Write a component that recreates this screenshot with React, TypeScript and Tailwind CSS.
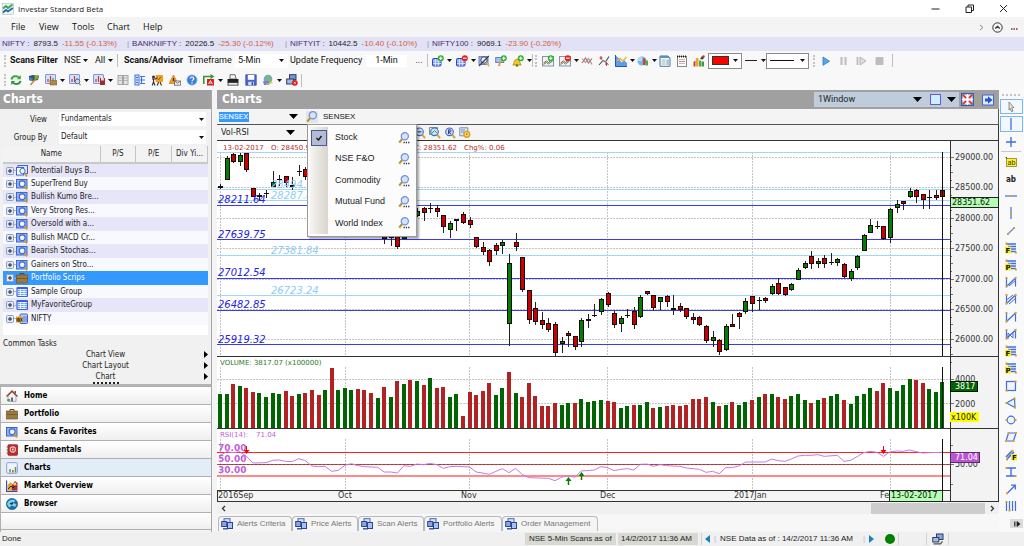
import type { ReactNode } from "react";
import clsx from "clsx";

/* ---------- icons ---------- */

function Ico({ children, className }: { children: ReactNode; className?: string }) {
  return (
    <svg viewBox="0 0 12 12" className={clsx("h-3 w-3 flex-shrink-0", className)} aria-hidden="true">
      {children}
    </svg>
  );
}

function Caret() {
  return (
    <svg viewBox="0 0 5 3" className="h-[3px] w-[5px] flex-shrink-0" aria-hidden="true">
      <path d="M0 0h5L2.5 3z" fill="#111" />
    </svg>
  );
}

function BigCaret() {
  return (
    <svg viewBox="0 0 9 5" className="h-[5px] w-[9px] flex-shrink-0" aria-hidden="true">
      <path d="M0 0h9L4.5 5z" fill="#000" />
    </svg>
  );
}

const miniChart = (
  <>
    <rect x="0.5" y="0.5" width="10" height="9" rx="0.5" fill="#d3e0fb" stroke="#7f97dd" />
    <path d="M3 8V5M5.5 8V2" stroke="#d23b3b" strokeWidth="1.2" />
    <path d="M8 8V4" stroke="#2f9a4a" strokeWidth="1.2" />
  </>
);
const gridBox = (
  <>
    <rect x="0.5" y="3.5" width="8.5" height="7.5" rx="1" fill="#7f9df0" stroke="#2c48c8" />
    <path d="M1 6h8M1 8.5h8M3.5 4v7M6.3 4v7" stroke="#e6edff" strokeWidth="0.8" />
  </>
);
const plusBadge = (
  <>
    <circle cx="8.8" cy="3.2" r="3" fill="#2fae2f" />
    <path d="M7 3.2h3.6M8.8 1.4v3.6" stroke="#fff" strokeWidth="1.1" />
  </>
);
const minusBadge = (
  <>
    <circle cx="8.8" cy="3.2" r="3" fill="#e81c1c" />
    <path d="M7 3.2h3.6" stroke="#fff" strokeWidth="1.2" />
  </>
);
const trendBox = (
  <>
    <rect x="0.5" y="1.5" width="11" height="9.5" fill="#eef3fa" stroke="#8a93a5" />
    <path d="M1.5 8l3-2 2 1.5 4-3.5" stroke="#d23b3b" fill="none" />
    <path d="M1.5 9.5l3-2 2 1.5 4-3" stroke="#2f9a4a" fill="none" />
  </>
);

function LogoIcon() {
  return (
    <Ico>
      <rect x="0.5" y="0.5" width="11" height="11" fill="#eef5f5" stroke="#a8b9c5" strokeWidth="0.6" />
      <path d="M1 5.5l3-2.5 2 2 4.5-3.5" stroke="#35a84b" strokeWidth="1.8" fill="none" />
      <path d="M1 9.5l3-2.5 2 1.5L10.8 5" stroke="#2a67a8" strokeWidth="1.8" fill="none" />
    </Ico>
  );
}
function RefreshIcon() {
  return (
    <Ico>
      <path d="M1.5 5.5C2 2 7 1.2 9 3.5" stroke="#38a845" strokeWidth="2" fill="none" />
      <path d="M10.8 1v4.2H6.8z" fill="#38a845" />
      <path d="M10.5 6.8C10 10.2 5 11 3 8.7" stroke="#2f9440" strokeWidth="2" fill="none" />
      <path d="M1.2 11V7h4z" fill="#2f9440" />
    </Ico>
  );
}
function BrushIcon() {
  return (
    <Ico>
      <path d="M1 2l4-1 6 1-1 4-5 1-4-1z" fill="#3d4a66" />
      <path d="M6 2l5-1-1 4-3 1z" fill="#69b33c" />
      <path d="M1 3l4 1-1 3-3-1z" fill="#3f7fd6" />
      <path d="M2.5 11L7 5.5" stroke="#c8882a" strokeWidth="1.5" />
    </Ico>
  );
}
function ChartFolderIcon() {
  return (
    <Ico>
      {miniChart}
      <path d="M5 6.5h7V11H5z" fill="#b08848" stroke="#7c5a26" strokeWidth="0.5" />
    </Ico>
  );
}
function ChartSearchIcon() {
  return (
    <Ico>
      {miniChart}
      <circle cx="8.5" cy="7.5" r="2.3" fill="#c9defa" stroke="#4b6fb8" />
      <path d="M10 9.3l1.6 2" stroke="#c8922a" strokeWidth="1.4" />
    </Ico>
  );
}
function ChartRemoveIcon() {
  return (
    <Ico>
      {miniChart}
      <path d="M7 4h5v7H7z" fill="#9c2f35" />
      <path d="M8 4h2.8v2.5H8z" fill="#e8dede" />
    </Ico>
  );
}
function ColumnsIcon() {
  return (
    <Ico>
      <rect x="1" y="1.5" width="4.5" height="9" fill="#e4e4e4" stroke="#a5a5a5" />
      <rect x="6.5" y="1.5" width="4.5" height="9" fill="#e4e4e4" stroke="#a5a5a5" />
      <path d="M1.5 4h4M1.5 6.5h4M7 4h4M7 6.5h4" stroke="#a5a5a5" strokeWidth="0.7" />
    </Ico>
  );
}
function TreeListIcon() {
  return (
    <Ico>
      <rect x="1" y="1" width="4" height="10" fill="#cfe0fb" stroke="#3c74d8" />
      <path d="M6 2.5h1.5v7H6M6 6h5M7.5 2.5H11M7.5 9.5H11" stroke="#3c74d8" strokeWidth="1.1" fill="none" />
      <path d="M2 3.5h2M2 6h2M2 8.5h2" stroke="#3c74d8" />
    </Ico>
  );
}
function TeacherIcon() {
  return (
    <Ico>
      <path d="M4.5 1H12v7H4.5z" fill="#f0a021" />
      <path d="M7 6l3-3" stroke="#8a4c0a" />
      <circle cx="2.5" cy="3" r="1.5" fill="#333" />
      <path d="M1 5h3.5l2-1.2M2.5 5v3L1.2 11.5M2.5 8l1.6 3.5M9 8l1.5 3.5M7.5 8L6.3 11.5" stroke="#333" strokeWidth="1.1" fill="none" />
    </Ico>
  );
}
function WarnMailIcon() {
  return (
    <Ico>
      <path d="M4.5 1L9 9.5H0z" fill="#f59b1c" stroke="#c86d08" strokeWidth="0.6" />
      <path d="M4.5 4v3" stroke="#332" strokeWidth="1.2" />
      <rect x="5.5" y="7" width="6" height="4.2" fill="#eee" stroke="#555" strokeWidth="0.7" />
      <path d="M5.5 7l3 2.3 3-2.3" stroke="#555" strokeWidth="0.7" fill="none" />
    </Ico>
  );
}
function HelpIcon() {
  return (
    <Ico>
      <circle cx="6" cy="6" r="5.2" fill="#3b7ddb" stroke="#b8c9e0" strokeWidth="0.8" />
      <path d="M4.2 4.6c0-2.2 3.6-2.1 3.6 0 0 1.3-1.8 1.3-1.8 2.7M6 8.3v1.2" stroke="#fff" strokeWidth="1.2" fill="none" />
    </Ico>
  );
}
function ExportIcon() {
  return (
    <Ico>
      <path d="M0.8 10V2.5H8" stroke="#2c9c3c" strokeWidth="1.6" fill="none" />
      <path d="M7.5 0l4 2.5-4 2.5z" fill="#2c9c3c" />
      <rect x="4" y="5" width="7" height="6.5" fill="#d32222" />
      <path d="M5.5 10l2-3.5 2 3.5M6.2 9h2.6" stroke="#fff" strokeWidth="0.8" fill="none" />
    </Ico>
  );
}
function PrinterIcon() {
  return (
    <Ico>
      <path d="M3 5V0.7h5L9.2 5z" fill="#f4f4f4" stroke="#333" strokeWidth="0.7" />
      <path d="M0.5 5h11v4h-11z" fill="#222" />
      <path d="M1.5 8.5h9l0.8 2.7H0.7z" fill="#e9e9e9" stroke="#222" strokeWidth="0.7" />
    </Ico>
  );
}
function SaveIcon() {
  return (
    <Ico>
      <rect x="0.8" y="0.8" width="10.4" height="10.4" fill="#4a63c8" stroke="#26388f" strokeWidth="0.6" />
      <rect x="2.8" y="1" width="6.5" height="4.8" fill="#fff" />
      <rect x="3.2" y="7.8" width="5.6" height="3.4" fill="#d9dff4" />
      <rect x="6.6" y="8.3" width="1.4" height="2.6" fill="#26388f" />
    </Ico>
  );
}
function GlobeDbIcon() {
  return (
    <Ico>
      <circle cx="6" cy="5" r="4.3" fill="#6fa3e6" />
      <path d="M3 2.5l3-1.5 2 2-3 2.5zM6 6l3.5-2 0.5 3-3 2z" fill="#7cc24b" />
      <path d="M1 7h6v4H2z" fill="#7a83c9" />
      <path d="M4 10.5l6.5-2" stroke="#e0c04a" strokeWidth="1.3" />
    </Ico>
  );
}
function MonitorStopIcon() {
  return (
    <Ico>
      <rect x="3.5" y="0.7" width="6.5" height="5" fill="#6d9ae0" stroke="#333a55" />
      <rect x="0.7" y="5" width="7" height="5" fill="#9dbbe8" stroke="#333a55" />
      <circle cx="8.8" cy="8.8" r="2.9" fill="#e31b1b" />
      <path d="M7.8 7.8l2 2M9.8 7.8l-2 2" stroke="#fff" strokeWidth="0.7" />
    </Ico>
  );
}
function MagnifierGridIcon() {
  return (
    <Ico>
      <rect x="1" y="1.5" width="9" height="8" fill="#a9bcf2" stroke="#6a80cc" />
      <circle cx="6" cy="5" r="3.2" fill="#e8eefb" stroke="#333b55" strokeWidth="0.9" />
      <path d="M1 11L10.8 1" stroke="#333b55" strokeWidth="1.1" />
      <path d="M8 7.5l3.2 3.7" stroke="#e2b23a" strokeWidth="1.5" />
    </Ico>
  );
}
function GroupAddIcon() {
  return (
    <Ico>
      <rect x="0.7" y="2.5" width="8" height="5" fill="#a8bdf2" stroke="#6a80cc" />
      <path d="M4.5 7v4M6.5 5.5l-3 5.5" stroke="#d2a12d" strokeWidth="1.5" />
      {plusBadge}
    </Ico>
  );
}
function BellAddIcon() {
  return (
    <Ico>
      <path d="M0.8 10C2.5 8.5 1.5 4.5 5 4.2 8.5 4.5 7.5 8.5 9.2 10z" fill="#f3c820" stroke="#9c7808" strokeWidth="0.7" />
      <circle cx="5" cy="10.5" r="1.2" fill="#8a6a08" />
      {plusBadge}
    </Ico>
  );
}
function CrossLinesIcon() {
  return (
    <Ico>
      <path d="M1 8l3.5-5 3 5L11 3.5" stroke="#d05a5a" fill="none" strokeWidth="1.1" />
      <path d="M1 3.5l3.5 4 3-4 3.5 6" stroke="#8a95a8" fill="none" strokeWidth="1.1" />
    </Ico>
  );
}
function CrossDotsIcon() {
  return (
    <Ico>
      <path d="M1 10l4-4.5L7.5 7 11 1.5" stroke="#444c5c" fill="none" strokeWidth="1.1" />
      <path d="M2 3l3 2.5 2.5 1L11 10" stroke="#9aa2b0" fill="none" />
      <path d="M3 1v3.5M1.5 3h3M8.5 7.5V11M7 9h3" stroke="#c33" />
    </Ico>
  );
}
function AreaChartIcon() {
  return (
    <Ico>
      <path d="M0.5 0.5v11H12V8L9 5 6.5 7.5 3.5 3z" fill="#5f9bec" />
      <path d="M0.5 0v11.5H12" stroke="#2956b0" fill="none" />
      <path d="M2 6l3-2.5L8 6l3.5-4" stroke="#eeb62f" strokeWidth="1.4" fill="none" />
    </Ico>
  );
}
function PieChartIcon() {
  return (
    <Ico>
      <circle cx="5" cy="6" r="4.5" fill="#74b8e8" />
      <path d="M1 3l4-2v5H0.5z" fill="#b5dcf5" />
      <path d="M6 3.5h2.5V10H6z" fill="#d83b3b" />
      <path d="M8.5 5.5H11v5H8.5z" fill="#49ab4f" />
    </Ico>
  );
}
function DocIcon() {
  return (
    <Ico>
      <path d="M1 1h8l2 2v8.3H1z" fill="#f5fafc" stroke="#4c7791" />
      <path d="M1 1h8l2 2H1z" fill="#5b93b5" />
      <path d="M2.5 5h4M2.5 7h4M2.5 9h4" stroke="#8ba6b5" strokeWidth="0.8" />
      <path d="M7.5 4.5h2.3V10H7.5z" fill="#9ac3d8" />
    </Ico>
  );
}
function NotepadIcon() {
  return (
    <Ico>
      <rect x="1.5" y="1.5" width="9" height="10" fill="#fff" stroke="#888" />
      <path d="M1 1.5h10" stroke="#222" strokeWidth="2" strokeDasharray="1 1" />
      <path d="M3 4.5h6M3 8.5h6" stroke="#aaa" strokeWidth="0.8" />
      <path d="M3 6.5h6" stroke="#d55" strokeWidth="0.8" />
    </Ico>
  );
}
function BarsPinIcon() {
  return (
    <Ico>
      <path d="M0.5 11.5V7l2-1.5v6z" fill="#d83b3b" />
      <path d="M3 11.5V3h2.5v8.5z" fill="#eaa52a" />
      <path d="M6 11.5V5.5h2v6z" fill="#49ab4f" />
      <path d="M8.5 11.5v-5H11v5z" fill="#3f9a45" />
      <path d="M7 4l2-3 2 1.5-1 2z" fill="#3a4256" />
      <circle cx="10.5" cy="1.5" r="1.2" fill="#c33" />
    </Ico>
  );
}
function LensIcon({ dotted }: { dotted?: boolean }) {
  return (
    <Ico>
      <circle cx="6.8" cy="4.3" r="3.6" fill="#d4e3fb" stroke="#6f8fd4" strokeWidth="1.2" />
      <path d="M4.2 7L1.2 10.6" stroke="#b99438" strokeWidth="2.2" />
      {dotted && <path d="M5.5 10.5h6" stroke="#333" strokeWidth="1.3" strokeDasharray="1.3 1" />}
    </Ico>
  );
}
function ZoomIcon({ kind }: { kind: "out" | "area" | "reset" }) {
  return (
    <Ico>
      {kind === "area" && <path d="M0.5 0.5h8v7h-8z" fill="#e8f2e4" stroke="#6b8f9c" />}
      <circle cx="5.5" cy="4.8" r="3.8" fill="#cfe0fb" stroke="#4569c0" strokeWidth="1.1" />
      {kind === "out" && <path d="M3.5 4.8h4" stroke="#2b4a9c" strokeWidth="1.2" />}
      {kind === "area" && <path d="M2.5 6.5l3-3L8 6" stroke="#37a04a" fill="none" />}
      {kind === "reset" && <path d="M4.5 7V2.8H6a1 1 0 010 2H4.5L7 7" stroke="#2b3f8c" fill="none" />}
      <path d="M8.3 7.8l2.8 3.2" stroke="#d9a32c" strokeWidth="1.9" />
    </Ico>
  );
}
function NoteGearIcon() {
  return (
    <Ico>
      <path d="M0.8 0.8h8v8h-8z" fill="#dce7fa" stroke="#6f8fc4" />
      <path d="M2 3h4M2 5h3" stroke="#6f8fc4" />
      <circle cx="7.8" cy="7.3" r="2.9" fill="#fbe28a" stroke="#e0a01c" strokeWidth="1.5" />
      <circle cx="7.8" cy="7.3" r="1" fill="#b77b10" />
    </Ico>
  );
}
function BriefcaseIcon() {
  return (
    <Ico>
      <path d="M4 3V1.5h4V3" stroke="#5f451c" fill="none" />
      <rect x="0.4" y="3" width="11.2" height="8" fill="#9b7a42" stroke="#6c4f22" strokeWidth="0.6" />
      <path d="M0.5 6.5h11" stroke="#6c4f22" strokeWidth="0.7" />
    </Ico>
  );
}
function ScanIcon() {
  return (
    <Ico>
      <rect x="0.5" y="1.5" width="10.5" height="8.5" fill="#8fb0f2" stroke="#3f66cf" />
      <circle cx="6.2" cy="5.8" r="2.9" fill="#eef4ff" stroke="#3f66cf" strokeWidth="1.1" />
      <path d="M8.5 8.3l2.6 3" stroke="#cf9d2c" strokeWidth="1.8" />
    </Ico>
  );
}
function ScanStackIcon() {
  return (
    <Ico>
      <rect x="2" y="0.5" width="9.5" height="8" fill="#dfe9fd" stroke="#3f66cf" />
      <rect x="0.5" y="2.5" width="7" height="7.5" fill="#fff" stroke="#3f66cf" />
      <circle cx="6.5" cy="6" r="2.7" fill="#eef4ff" stroke="#3f66cf" />
      <path d="M8.5 8.3l2.6 3" stroke="#cf9d2c" strokeWidth="1.8" />
    </Ico>
  );
}
function TableIcon() {
  return (
    <Ico>
      <rect x="1" y="1.5" width="10.5" height="9" rx="1" fill="#d4ecfb" stroke="#4459e6" strokeWidth="1.2" />
      <path d="M2 4.5h9M2 6.5h9M2 8.5h9" stroke="#58a4de" strokeWidth="0.9" />
      <path d="M4.5 3v7M8 3v7" stroke="#fff" strokeWidth="0.7" />
      <path d="M1 1.5h10.5V3H1z" fill="#4459e6" />
    </Ico>
  );
}
function IndexIcon() {
  return (
    <Ico>
      <rect x="4" y="1" width="7.5" height="9.5" rx="1" fill="#a9d3f2" stroke="#4459e6" />
      <path d="M7 4h4M7 6h4M7 8h4" stroke="#4459e6" strokeWidth="0.8" />
      <rect x="0" y="3.5" width="7" height="6" fill="#f0a52a" />
      <path d="M1 5v3.5M2.3 5v3.5h1v-3zM4.5 5l1.8 3.5M6.3 5L4.5 8.5" stroke="#222" strokeWidth="0.8" fill="none" />
    </Ico>
  );
}
function HomeIcon() {
  return (
    <Ico>
      <path d="M2 6v5.3h8V6L6 2z" fill="#f7f3ec" stroke="#777" strokeWidth="0.6" />
      <path d="M0.5 6.5L6 1l5.5 5.5" stroke="#8d4630" strokeWidth="1.4" fill="none" />
      <path d="M8.5 1H10v3L8.5 2.5z" fill="#8d4630" />
      <path d="M5 7.5h2v4H5z" fill="#4a6ca8" />
      <path d="M1 11h3V9H1.5z" fill="#5aa03c" />
    </Ico>
  );
}
function BookIcon() {
  return (
    <Ico>
      <rect x="2" y="0.7" width="9.5" height="10.6" rx="0.8" fill="#c22b2b" stroke="#851414" strokeWidth="0.7" />
      <circle cx="6.8" cy="5.5" r="2.6" fill="none" stroke="#f4c9c9" strokeWidth="1.1" />
      <circle cx="6.8" cy="5.5" r="0.9" fill="#fff" />
      <path d="M0.6 3h2M0.6 6h2M0.6 9h2" stroke="#666" />
    </Ico>
  );
}
function ChartsNavIcon() {
  return (
    <Ico>
      <rect x="0.7" y="0.7" width="10.6" height="10.6" rx="1" fill="#eef3fd" stroke="#8f9fd6" />
      <path d="M4 10.5V7M9.5 10.5V5" stroke="#45a850" strokeWidth="1.5" />
      <path d="M6.8 10.5V8" stroke="#d64545" strokeWidth="1.5" />
    </Ico>
  );
}
function MarketIcon() {
  return (
    <Ico>
      <path d="M0.5 0.5v11h11" stroke="#2956b0" strokeWidth="1.3" fill="none" />
      <path d="M1.5 10.5V5l3-3 3 3.5v5z" fill="#e5a32f" />
      <path d="M6 10.5V5l3-4 2.5 2v7.5z" fill="#b0322c" />
      <path d="M2 9l3-3 2 2 4-5" stroke="#222" fill="none" />
      <circle cx="9" cy="4" r="1.6" fill="#f3dc75" />
    </Ico>
  );
}
function BrowserIcon() {
  return (
    <Ico>
      <circle cx="6" cy="6" r="5.6" fill="#1c6fa3" stroke="#134d73" strokeWidth="0.6" />
      <path d="M1 6c1-4 6-5.5 8.5-3L7 4.5l3.5 2L9 9 6 7.5 3 9.5z" fill="#7fd0ee" />
      <path d="M3.5 5.5l3-1.5 1 1.5-2 1.5z" fill="#0e3f60" />
    </Ico>
  );
}
function AlertTabIcon() {
  return (
    <Ico>
      <rect x="3" y="0.7" width="6" height="6.5" fill="#dbe6fb" stroke="#4a62ac" />
      <rect x="0.7" y="3.5" width="5" height="5" fill="#8ba3e8" stroke="#2c4490" />
      <rect x="6.5" y="4.5" width="5" height="6" fill="#a9c0f5" stroke="#2c4490" />
      <path d="M2 10.8h5" stroke="#2c4490" strokeWidth="1.3" />
    </Ico>
  );
}
function FullscreenIcon() {
  return (
    <svg viewBox="0 0 14 14" className="h-[13px] w-[13px]" aria-hidden="true">
      <rect width="14" height="14" fill="#2f5fb5" />
      <rect x="1.5" y="1.5" width="11" height="11" fill="#f7dede" />
      <path d="M2 2l3.5 3.5M12 2L8.5 5.5M2 12l3.5-3.5M12 12L8.5 8.5" stroke="#d92b2b" strokeWidth="1.7" />
      <path d="M7 1v12M1 7h12" stroke="#fff" strokeWidth="1.5" />
    </svg>
  );
}
function PopOutIcon() {
  return (
    <Ico>
      <rect x="0.5" y="1" width="11" height="10" fill="#dfe9fb" stroke="#3d6bd0" />
      <path d="M3 4.5h3V2.2L10.5 6 6 9.8V7.5H3z" fill="#2456d0" />
    </Ico>
  );
}

/* ---------- drawing tools rail ---------- */

const BLUE = "#3f6fe0";
const GOLD = "#d6a032";

function dots(points: number[][]) {
  return points.map(([x, y]) => <rect key={`${x}-${y}`} x={x - 1} y={y - 1} width="2" height="2" fill={GOLD} />);
}
function letterBars(letter: string) {
  return (
    <>
      <path d="M1 2h10M3 4.5h8M5 7h6M5 9.5h6" stroke={BLUE} strokeWidth="1.3" />
      {dots([[1.5, 1.5], [10.8, 10.5]])}
      <rect x="0" y="4.5" width="6" height="7" fill="#ffee1f" />
      <text x="0.5" y="11" className="font-['DejaVu_Sans'] text-[7px] font-bold" fill="#111">{letter}</text>
    </>
  );
}
function zigzag(extra: ReactNode) {
  return (
    <>
      <path d="M1.5 2v8.5L10.5 2v8.5" stroke={BLUE} strokeWidth="1.2" fill="none" />
      {extra}
      {dots([[1.5, 2], [10.5, 2], [1.5, 10.3]])}
    </>
  );
}

const railTools: { label: string; art: ReactNode }[] = [
  {
    label: "Callout",
    art: (
      <>
        <path d="M1 1l1 2.5" stroke="#333" strokeWidth="1.2" />
        <rect x="1.5" y="2.5" width="10" height="8" fill="#fff22a" stroke="#8d8422" strokeWidth="0.8" />
        <text x="2.5" y="9" className="font-['Liberation_Sans'] text-[7px]" fill="#333">ab</text>
      </>
    ),
  },
  { label: "Text", art: <text x="1" y="9" className="font-['DejaVu_Sans_Condensed'] text-[8px] font-bold" fill="#222">ab</text> },
  { label: "Horizontal line", art: <><path d="M0 6h12" stroke={BLUE} strokeWidth="1.2" />{dots([[6, 6]])}</> },
  { label: "Vertical line", art: <><path d="M6 0v12" stroke={BLUE} strokeWidth="1.2" />{dots([[6, 6]])}</> },
  { label: "Trend line", art: <><path d="M3 9l6-6" stroke="#6f87c0" strokeWidth="1.2" />{dots([[3, 9], [9, 3]])}</> },
  { label: "Fibonacci levels", art: letterBars("F") },
  { label: "Price levels", art: letterBars("P") },
  { label: "Channel", art: zigzag(<path d="M4 10l7-6" stroke={BLUE} />) },
  { label: "Parallel channel", art: zigzag(<path d="M1.5 7L8 2M4 11l7-6" stroke={BLUE} />) },
  { label: "Zigzag", art: zigzag(null) },
  { label: "Wave", art: zigzag(<path d="M3 11V5l5 5V4" stroke={BLUE} fill="none" />) },
  { label: "Fibonacci time", art: letterBars("F") },
  { label: "Price time", art: letterBars("P") },
  { label: "Rectangle", art: <><rect x="1.5" y="1.5" width="9" height="9" fill="#eef3fd" stroke={BLUE} strokeWidth="1.2" />{dots([[10.5, 1.5], [1.5, 10.5]])}</> },
  { label: "Triangle", art: <><path d="M1.5 6l8-4.5 0.5 9z" fill="#eef3fd" stroke={BLUE} strokeWidth="1.2" />{dots([[1.5, 6], [9.5, 1.5], [10, 10.5]])}</> },
  { label: "Ellipse", art: <><circle cx="6" cy="6" r="3.8" fill="#eef3fd" stroke={BLUE} strokeWidth="1.2" />{dots([[1.5, 6], [10.5, 6]])}</> },
  { label: "Parallelogram", art: <><path d="M3.5 2H11l-2.5 8H1z" fill="#eef3fd" stroke={BLUE} strokeWidth="1.2" />{dots([[3.5, 2], [11, 2], [1.2, 10], [8.5, 10]])}</> },
  {
    label: "Fibonacci fan",
    art: (
      <>
        <path d="M1 8l6-6M2 10l7-7" stroke={BLUE} strokeWidth="1.7" />
        {dots([[7.5, 1.8], [2, 10.5]])}
        <rect x="6" y="5" width="6" height="6.5" fill="#ffee1f" />
        <text x="7" y="11" className="font-['DejaVu_Sans'] text-[7px] font-bold" fill="#111">F</text>
      </>
    ),
  },
  { label: "Range", art: <><path d="M1 2h10M1 10h10M6 2v8" stroke={BLUE} strokeWidth="1.4" />{dots([[1.5, 2], [10.5, 10]])}</> },
  { label: "Arrow", art: <><path d="M2.5 10L10 2.5M6 2.2h4.3v4.3" stroke={BLUE} strokeWidth="1.3" fill="none" />{dots([[2, 10.3]])}</> },
  { label: "Time cycles", art: <><path d="M1.5 1v10M4.5 1v10M7.5 1v10M10.5 1v10" stroke={BLUE} strokeWidth="1.2" />{dots([[1.5, 2], [4.5, 10.5]])}</> },
];

/* ---------- bars ---------- */

const buttonWidths = {
  base: "w-[17px]",
  wide: "w-[18px]",
  menu: "w-[22px]",
  wideMenu: "w-6",
};

function ToolButton({ label, children, size = "base" }: { label: string; children: ReactNode; size?: keyof typeof buttonWidths }) {
  return (
    <button
      type="button"
      aria-label={label}
      className={clsx("flex h-4 flex-shrink-0 items-center gap-[3px] pl-[2px]", buttonWidths[size])}
    >
      {children}
      {(size === "menu" || size === "wideMenu") && <Caret />}
    </button>
  );
}

function Grip() {
  return <div className="h-3 w-0 flex-shrink-0 border-l-2 border-dotted border-[#c4c4c4]" />;
}
function Divider() {
  return <div className="h-[13px] w-px flex-shrink-0 bg-[#bdbdbd]" />;
}

function ToolSelect({ label, value, className }: { label: string; value: string; className?: string }) {
  return (
    <div className={clsx("relative flex h-[14px] flex-shrink-0 items-center", className)}>
      <select aria-label={label} defaultValue={value} className="w-full appearance-none bg-transparent pl-[3px] outline-none">
        <option>{value}</option>
      </select>
      <div className="pointer-events-none absolute right-1">
        <Caret />
      </div>
    </div>
  );
}

const quotes = [
  { name: "NIFTY", last: "8793.5", change: "-11.55 (-0.13%)", width: "w-[129px]" },
  { name: "BANKNIFTY", last: "20226.5", change: "-25.30 (-0.12%)", width: "w-[158px]" },
  { name: "NIFTYIT", last: "10442.5", change: "-10.40 (-0.10%)", width: "w-[142px]" },
  { name: "NIFTY100", last: "9069.1", change: "-23.90 (-0.26%)", width: "w-[160px]" },
];

function TitleBar() {
  return (
    <header className="flex h-[17px] items-center bg-white pl-[2px] pr-4 font-['Open_Sans',sans-serif] text-[8px] text-[#222]">
      <LogoIcon />
      <h1 className="ml-1 flex-1">Investar Standard Beta</h1>
      <div className="flex items-center gap-[25px]">
        <button type="button" aria-label="Minimize">
          <svg viewBox="0 0 9 9" className="h-[9px] w-[9px]"><path d="M0.5 5h8" stroke="#222" /></svg>
        </button>
        <button type="button" aria-label="Restore">
          <svg viewBox="0 0 9 9" className="h-[9px] w-[9px]"><path d="M1 3h5.5v5.5H1zM3 3V1h5.5v5.5h-2" stroke="#222" fill="none" /></svg>
        </button>
        <button type="button" aria-label="Close">
          <svg viewBox="0 0 9 9" className="h-[9px] w-[9px]"><path d="M1 1l7 7M8 1L1 8" stroke="#222" /></svg>
        </button>
      </div>
    </header>
  );
}

function MenuBar() {
  return (
    <nav className="flex h-5 items-center bg-[#f4f4f4] pl-[11px] pr-[6px] font-['Open_Sans',sans-serif] text-[9px] text-[#111]">
      <button type="button" className="w-7 text-left">File</button>
      <button type="button" className="w-[33px] text-left">View</button>
      <button type="button" className="w-[35px] text-left">Tools</button>
      <button type="button" className="w-9 text-left">Chart</button>
      <button type="button" className="text-left">Help</button>
      <div className="ml-auto flex items-center gap-2">
        <svg viewBox="0 0 5 7" className="h-[7px] w-[5px]"><path d="M1 1l3 2.5L1 6" stroke="#888" fill="none" /></svg>
        <button type="button" aria-label="Collapse">
          <svg viewBox="0 0 11 11" className="h-[11px] w-[11px]">
            <circle cx="5.5" cy="5.5" r="4.7" fill="none" stroke="#333" />
            <path d="M3.3 6.5l2.2-2.2 2.2 2.2" stroke="#333" fill="none" strokeWidth="1.3" />
          </svg>
        </button>
        <svg viewBox="0 0 7 2" className="mt-1 h-[2px] w-[7px]"><path d="M0 1h7" stroke="#7a3040" strokeWidth="1.5" strokeDasharray="1.5 1" /></svg>
      </div>
    </nav>
  );
}

function Ticker() {
  return (
    <ul className="flex h-[14px] items-center bg-[#e1e2f5] pl-[2px] font-['Liberation_Sans',Arial,sans-serif] text-[8px]">
      {quotes.map((q, i) => (
        <li key={q.name} className={clsx("flex gap-1 whitespace-nowrap", q.width)}>
          {i > 0 && <span className="-ml-1 -mr-px text-[#999]">|</span>}
          <span className="text-[#4b2c6b]">{q.name} :</span>
          <span className="text-[#222]">{q.last}</span>
          <span className="text-[#d9603c]">{q.change}</span>
        </li>
      ))}
    </ul>
  );
}

function FilterBar() {
  return (
    <div className="flex h-[19px] items-center bg-[#f8f8f8] pl-1 font-['Roboto',sans-serif] text-[9px] text-[#111]">
      <Grip />
      <span className="ml-1 w-[51px] font-bold">Scans Filter</span>
      <ToolSelect label="Exchange" value="NSE" className="w-[31px]" />
      <ToolSelect label="Segment" value="All" className="w-[25px]" />
      <Divider />
      <span className="ml-[6px] w-16 font-bold">Scans/Advisor</span>
      <span className="w-[47px]">Timeframe</span>
      <ToolSelect label="Timeframe" value="5-Min" className="w-[53px] bg-white" />
      <span className="ml-[2px] w-[76px]">Update Frequency</span>
      <input aria-label="Update Frequency" defaultValue="1-Min" className="h-3 w-[41px] bg-white text-center outline-none" />
      <button type="button" className="ml-1 w-4">...</button>
      <Divider />
      <div className="ml-[2px] flex items-center">
        <ToolButton label="Add scan" size="wideMenu"><Ico>{gridBox}{plusBadge}</Ico></ToolButton>
        <ToolButton label="Remove scan" size="menu"><Ico>{gridBox}{minusBadge}</Ico></ToolButton>
        <ToolButton label="Find scan"><MagnifierGridIcon /></ToolButton>
        <ToolButton label="Add group"><GroupAddIcon /></ToolButton>
        <ToolButton label="Add alert" size="menu"><BellAddIcon /></ToolButton>
      </div>
      <Divider />
      <div className="ml-[2px] flex items-center gap-[3px]">
        <Grip />
        <div className="flex items-center">
          <ToolButton label="Add indicator"><Ico>{trendBox}{plusBadge}</Ico></ToolButton>
          <ToolButton label="Remove indicator" size="menu"><Ico>{trendBox}{minusBadge}</Ico></ToolButton>
          <ToolButton label="Crossover"><CrossLinesIcon /></ToolButton>
          <ToolButton label="Signals"><CrossDotsIcon /></ToolButton>
          <ToolButton label="Chart type" size="menu"><AreaChartIcon /></ToolButton>
          <ToolButton label="Distribution" size="menu"><PieChartIcon /></ToolButton>
          <ToolButton label="Report"><DocIcon /></ToolButton>
          <ToolButton label="Notes"><NotepadIcon /></ToolButton>
          <ToolButton label="Statistics"><BarsPinIcon /></ToolButton>
        </div>
      </div>
      <button type="button" aria-label="Line colour" className="flex h-4 w-[34px] flex-shrink-0 items-center justify-between border border-[#8c8c8c] bg-white px-[3px]">
        <span className="h-[9px] w-[17px] border border-[#333] bg-[#ff0000]" />
        <Caret />
      </button>
      <button type="button" aria-label="Line width" className="ml-[3px] flex w-[21px] flex-shrink-0 items-center gap-1">
        <span className="h-px w-3 bg-[#222]" />
        <Caret />
      </button>
      <button type="button" aria-label="Line style" className="flex h-4 w-[43px] flex-shrink-0 items-center justify-between border border-[#8c8c8c] bg-white px-[3px]">
        <span className="h-px w-6 bg-[#111]" />
        <Caret />
      </button>
      <div className="ml-1 flex items-center gap-[5px]">
        <Grip />
        <button type="button" aria-label="Play" className="w-[13px]"><Ico><path d="M3 2l6.5 4.2L3 10.3z" fill="#56a5ec" stroke="#2d78cc" strokeWidth="0.8" /></Ico></button>
        <button type="button" aria-label="Pause" className="w-[13px]"><Ico><path d="M3.5 2v8M7.5 2v8" stroke="#c0c0c0" strokeWidth="2.2" /></Ico></button>
        <button type="button" aria-label="Step" className="w-[13px]"><Ico><path d="M1.5 2v8" stroke="#bbb" strokeWidth="1.8" /><path d="M4 2l6 4-6 4z" fill="#ddd" stroke="#b5b5b5" /></Ico></button>
        <button type="button" aria-label="Stop" className="w-[13px]"><Ico><rect x="1.5" y="2" width="8" height="8" rx="1" fill="#bdbdbd" /></Ico></button>
        <Divider />
      </div>
    </div>
  );
}

function IconBar() {
  return (
    <div className="flex h-5 items-center bg-[#f8f8f8] pl-1">
      <Grip />
      <div className="ml-[2px] flex items-center">
        <ToolButton label="Refresh" size="wide"><RefreshIcon /></ToolButton>
        <ToolButton label="Themes"><BrushIcon /></ToolButton>
        <ToolButton label="Open chart" size="wideMenu"><ChartFolderIcon /></ToolButton>
        <ToolButton label="Search chart" size="wideMenu"><ChartSearchIcon /></ToolButton>
        <ToolButton label="Delete chart" size="wideMenu"><ChartRemoveIcon /></ToolButton>
        <ToolButton label="Columns"><ColumnsIcon /></ToolButton>
        <ToolButton label="Tree"><TreeListIcon /></ToolButton>
        <ToolButton label="Training" size="wide"><TeacherIcon /></ToolButton>
        <ToolButton label="Alerts"><WarnMailIcon /></ToolButton>
        <ToolButton label="Help"><HelpIcon /></ToolButton>
        <ToolButton label="Export" size="wideMenu"><ExportIcon /></ToolButton>
        <ToolButton label="Print" size="wide"><PrinterIcon /></ToolButton>
        <ToolButton label="Save"><SaveIcon /></ToolButton>
        <ToolButton label="Data" size="wideMenu"><GlobeDbIcon /></ToolButton>
        <ToolButton label="Disconnect"><MonitorStopIcon /></ToolButton>
      </div>
      <Divider />
    </div>
  );
}

/* ---------- left panel ---------- */

const treeRows: { name: string; icon: ReactNode; selected?: boolean }[] = [
  { name: "Potential Buys B...", icon: <ScanStackIcon /> },
  { name: "SuperTrend Buy", icon: <ScanIcon /> },
  { name: "Bullish Kumo Bre...", icon: <ScanIcon /> },
  { name: "Very Strong Res...", icon: <ScanIcon /> },
  { name: "Oversold with a...", icon: <ScanIcon /> },
  { name: "Bullish MACD Cr...", icon: <ScanIcon /> },
  { name: "Bearish Stochas...", icon: <ScanIcon /> },
  { name: "Gainers on Stro...", icon: <ScanIcon /> },
  { name: "Portfolio Scrips", icon: <BriefcaseIcon />, selected: true },
  { name: "Sample Group", icon: <TableIcon /> },
  { name: "MyFavoriteGroup", icon: <TableIcon /> },
  { name: "NIFTY", icon: <IndexIcon /> },
];

const navItems: { name: string; icon: ReactNode; active?: boolean }[] = [
  { name: "Home", icon: <HomeIcon /> },
  { name: "Portfolio", icon: <BriefcaseIcon /> },
  { name: "Scans & Favorites", icon: <ScanIcon /> },
  { name: "Fundamentals", icon: <BookIcon /> },
  { name: "Charts", icon: <ChartsNavIcon />, active: true },
  { name: "Market Overview", icon: <MarketIcon /> },
  { name: "Browser", icon: <BrowserIcon /> },
];

function PanelTitle({ children }: { children: ReactNode }) {
  return <h2 className="font-['DejaVu_Sans_Condensed','DejaVu_Sans',sans-serif] text-[12px] font-bold leading-[19px] text-white">{children}</h2>;
}

function FieldRow({ id, label, value }: { id: string; label: string; value: string }) {
  return (
    <div className="flex items-center">
      <label htmlFor={id} className="w-[47px] pt-[2px] text-right">{label}</label>
      <div className="relative ml-3 flex h-[14px] flex-1 items-center bg-white">
        <select id={id} defaultValue={value} className="w-full appearance-none pl-[2px] outline-none">
          <option>{value}</option>
        </select>
        <div className="pointer-events-none absolute right-[2px]"><Caret /></div>
      </div>
    </div>
  );
}

function LeftPanel() {
  return (
    <aside className="flex w-[212px] flex-shrink-0 flex-col border-r border-[#a8a8a8] bg-[#f1f1f1] font-['DejaVu_Sans_Condensed','DejaVu_Sans',sans-serif] text-[8px] text-[#222]">
      <div className="h-[19px] bg-[#a0a0a0] pl-[3px]">
        <PanelTitle>Charts</PanelTitle>
      </div>
      <div className="flex h-[37px] flex-col gap-1 pr-[5px] pt-[3px]">
        <FieldRow id="view" label="View" value="Fundamentals" />
        <FieldRow id="group" label="Group By" value="Default" />
      </div>
      <div className="mx-[3px] h-[189px] bg-white">
        <table className="w-full table-fixed border-collapse">
          <thead className="bg-[#f3f3f3]">
            <tr className="h-[17px] border-b-2 border-[#c9c9c9]">
              <th className="w-[97px] p-0 font-normal">Name</th>
              <th className="border-l border-[#c4c4c4] p-0 font-normal">P/S</th>
              <th className="border-l border-[#c4c4c4] p-0 font-normal">P/E</th>
              <th className="border-l border-r border-[#c4c4c4] p-0 font-normal">Div Yi...</th>
            </tr>
          </thead>
          <tbody>
            {treeRows.map((row) => (
              <tr
                key={row.name}
                className={clsx(
                  "odd:h-[14px] even:h-[13px]",
                  row.selected ? "bg-[#3399ff] text-white" : "odd:bg-[#e6e6f8] even:bg-[#f8f8ff]",
                )}
              >
                <td colSpan={4} className="p-0 leading-3">
                  <div className="flex h-3 items-center pl-[3px]">
                    <button type="button" aria-label={`Expand ${row.name}`}>
                      <svg viewBox="0 0 8 8" className="h-2 w-2">
                        <rect x="0.5" y="0.5" width="7" height="7" rx="1" fill="#dfe8f5" stroke="#8a9fc0" />
                        <path d="M2 4h4M4 2v4" stroke="#223" />
                      </svg>
                    </button>
                    <span className="h-px w-[2px] bg-[#b5b5c0]" />
                    {row.icon}
                    <span className="ml-[3px]">{row.name}</span>
                  </div>
                </td>
              </tr>
            ))}
          </tbody>
        </table>
      </div>
      <div className="flex h-[51px] flex-col border-b-2 border-[#b4b4b4] px-[3px] pt-1">
        <p className="h-[10px] leading-[10px]">Common Tasks</p>
        {["Chart View", "Chart Layout", "Chart"].map((task) => (
          <button key={task} type="button" className="relative flex h-[11px] flex-shrink-0 items-center justify-center">
            {task}
            <svg viewBox="0 0 4 7" className="absolute right-0 h-[7px] w-1"><path d="M0 0l4 3.5L0 7z" fill="#000" /></svg>
          </button>
        ))}
        <div className="mx-auto w-[26px] border-t-2 border-dotted border-[#222]" />
      </div>
      <nav className="flex-1 border-l border-[#b0b0b0] bg-[#f2f2f2]">
        {navItems.map((item) => (
          <button
            key={item.name}
            type="button"
            className={clsx(
              "flex h-[18px] w-full items-center gap-[6px] border-t border-[#b0b0b0] pl-[5px] text-[8px] font-bold text-black",
              item.active ? "bg-[#e3edf7]" : "bg-linear-to-b from-white to-[#efefef]",
            )}
          >
            {item.icon}
            {item.name}
          </button>
        ))}
        <div className="h-[18px] border-y border-[#b0b0b0] bg-linear-to-b from-white to-[#efefef]" />
      </nav>
    </aside>
  );
}

/* ---------- chart ---------- */

// [high, open/close top, open/close bottom, low, colour], three units to a pixel
type Candle = [number, number, number, number, "g" | "r"];

const candles: (Candle | null)[] = [
  [283, 287, 293, 297, "g"], [198, 205, 269, 269, "g"], [188, 193, 215, 218, "r"], [188, 196, 215, 228, "g"],
  [188, 190, 240, 247, "r"], [295, 295, 320, 320, "r"], [308, 316, 322, 332, "r"], [300, 309, 312, 325, "r"],
  [243, 275, 290, 292, "g"], [255, 267, 270, 288, "r"], [257, 257, 280, 290, "r"], [262, 285, 292, 300, "r"],
  [225, 242, 245, 258, "r"], [232, 236, 262, 270, "r"],
  null, null, null, null, null, null, null, null, null, null, null,
  [420, 430, 448, 462, "r"], [420, 430, 445, 468, "r"], [420, 430, 470, 476, "r"], [420, 425, 447, 448, "g"], null,
  [355, 362, 378, 380, "g"], [350, 355, 370, 392, "r"], [340, 353, 357, 370, "g"], [345, 353, 367, 382, "r"],
  [374, 374, 412, 428, "r"], [393, 399, 420, 445, "g"], [386, 388, 394, 422, "r"], [366, 371, 398, 402, "r"],
  [380, 390, 405, 413, "r"], [442, 442, 472, 475, "r"], [457, 470, 487, 495, "r"], [476, 480, 517, 528, "r"],
  [460, 465, 482, 494, "r"], [450, 456, 469, 493, "g"], [493, 520, 703, 767, "g"], [430, 455, 472, 482, "r"],
  [500, 502, 600, 606, "r"], [600, 601, 691, 703, "r"], [635, 655, 695, 706, "r"], [667, 691, 706, 718, "r"],
  [685, 698, 721, 727, "r"], [697, 703, 790, 798, "r"], [740, 754, 762, 790, "g"], [724, 730, 738, 770, "r"],
  [738, 739, 772, 780, "r"], [685, 691, 757, 770, "g"], [673, 686, 693, 715, "g"], [642, 674, 677, 682, "r"],
  [624, 628, 667, 676, "g"], [606, 610, 646, 650, "r"], [663, 669, 706, 715, "r"], [678, 685, 703, 725, "g"],
  [658, 674, 677, 684, "r"], [650, 664, 706, 718, "r"], [615, 621, 680, 683, "g"], [602, 604, 612, 616, "r"],
  [614, 616, 653, 664, "r"], [620, 622, 637, 659, "g"], [614, 619, 637, 650, "r"], [615, 653, 658, 675, "g"],
  [639, 649, 660, 665, "r"], [653, 655, 680, 686, "r"], [670, 680, 691, 703, "r"], [678, 680, 705, 708, "r"],
  [705, 707, 752, 760, "r"], [723, 741, 754, 770, "g"], [748, 750, 785, 794, "r"], [703, 709, 781, 784, "g"],
  [673, 703, 710, 712, "r"], [666, 669, 682, 718, "r"], [624, 634, 667, 673, "g"], [619, 619, 641, 667, "r"],
  [620, 631, 634, 660, "g"], [620, 624, 634, 638, "r"], [582, 588, 613, 615, "g"], [564, 579, 612, 616, "r"],
  [590, 591, 616, 619, "r"], [580, 583, 599, 603, "g"], [535, 541, 570, 571, "g"], [512, 518, 534, 536, "g"],
  [482, 498, 523, 538, "r"], [503, 514, 523, 535, "g"], [496, 504, 523, 534, "r"], [490, 515, 518, 525, "r"],
  [503, 508, 520, 527, "g"], [519, 523, 560, 563, "r"], [538, 544, 568, 572, "g"], [495, 498, 535, 539, "g"],
  [432, 436, 483, 484, "g"], [388, 405, 429, 430, "g"], [393, 408, 411, 418, "r"], [407, 408, 447, 449, "r"],
  [354, 357, 444, 458, "g"], [330, 343, 353, 370, "g"], [332, 334, 341, 360, "r"], [295, 303, 322, 323, "g"],
  [298, 301, 322, 340, "r"], [312, 313, 330, 357, "r"], [300, 320, 324, 357, "r"], [300, 316, 323, 330, "r"],
  [296, 301, 320, 322, "r"],
];

const volumes: [number, "g" | "r"][] = [
  [102, "g"], [101, "g"], [131, "r"], [126, "g"], [119, "r"], [108, "r"], [105, "g"], [93, "g"], [105, "g"], [102, "g"],
  [111, "r"], [96, "r"], [101, "g"], [104, "r"], [115, "r"], [98, "r"], [113, "g"], [180, "r"], [113, "g"], [119, "g"],
  [113, "g"], [117, "r"], [115, "r"], [104, "r"], [90, "g"], [122, "r"], [93, "g"], [140, "r"], [131, "g"], [144, "r"],
  [142, "g"], [128, "r"], [151, "g"], [121, "r"], [124, "r"], [93, "g"], [101, "g"], [36, "r"], [108, "r"], [99, "r"],
  [110, "r"], [135, "r"], [99, "g"], [120, "g"], [167, "r"], [104, "g"], [93, "r"], [135, "r"], [95, "r"], [66, "r"],
  [66, "r"], [75, "r"], [70, "g"], [74, "g"], [74, "r"], [86, "g"], [79, "g"], [81, "g"], [83, "g"], [81, "r"],
  [77, "r"], [61, "g"], [66, "g"], [70, "r"], [70, "g"], [79, "g"], [61, "r"], [63, "g"], [66, "r"], [70, "r"],
  [66, "r"], [68, "r"], [88, "r"], [88, "r"], [93, "r"], [77, "g"], [66, "r"], [70, "g"], [79, "r"], [68, "g"],
  [77, "g"], [83, "r"], [94, "g"], [103, "r"], [103, "g"], [92, "r"], [87, "r"], [95, "g"], [101, "g"], [83, "g"],
  [76, "r"], [85, "g"], [90, "r"], [95, "g"], [101, "g"], [83, "r"], [73, "g"], [97, "g"], [101, "g"], [121, "g"],
  [110, "r"], [135, "r"], [121, "g"], [110, "g"], [130, "g"], [148, "g"], [144, "r"], [135, "r"], [117, "g"], [108, "g"],
  [139, "g"],
];

// [bar index, offset down the pane], three units to a pixel
const rsi: [number, number][] = [
  [0, 587], [1, 575], [2, 578], [3, 575], [4, 588], [5, 609], [7, 608], [8, 601], [9, 600], [10, 604], [11, 605],
  [12, 596], [13, 602], [14, 618], [15, 620], [16, 619], [17, 634], [18, 631], [19, 616], [20, 611], [21, 617],
  [22, 620], [24, 622], [25, 636], [26, 636], [27, 639], [28, 617], [29, 619], [30, 612], [31, 614], [32, 610],
  [33, 614], [34, 625], [35, 620], [36, 619], [38, 621], [39, 636], [40, 639], [41, 643], [42, 634], [43, 626],
  [44, 638], [45, 625], [46, 643], [47, 653], [50, 655], [51, 662], [52, 652], [53, 647], [54, 652], [55, 633],
  [57, 630], [58, 620], [59, 623], [60, 632], [61, 628], [62, 626], [63, 630], [64, 613], [65, 612], [66, 619],
  [67, 614], [68, 617], [70, 619], [71, 624], [73, 628], [74, 637], [75, 634], [76, 641], [77, 623], [78, 623],
  [79, 618], [80, 606], [83, 606], [84, 597], [85, 602], [86, 604], [87, 597], [88, 588], [89, 586], [90, 586],
  [91, 584], [92, 589], [94, 586], [95, 604], [96, 601], [97, 590], [98, 578], [99, 574], [100, 577], [101, 589],
  [102, 576], [103, 573], [104, 574], [105, 570], [106, 575], [107, 579], [108, 578], [110, 577],
];

const barX = (i: number) => 220 + Math.round(i * 6.568);
const priceY = (v: number) => 90 + Math.round(v / 3);

const priceTicks: [string, number][] = [
  ["29000.00", 157], ["28500.00", 187], ["28000.00", 218], ["27500.00", 248], ["27000.00", 279], ["26500.00", 309], ["26000.00", 339],
];
const months: [string, number, number][] = [
  ["2016Sep", 220, 218], ["Oct", 345, 338], ["Nov", 469, 461], ["Dec", 607, 600], ["2017Jan", 752, 734], ["Fe", 890, 880],
];
const supports: [string, number, number][] = [
  ["28211.64", 205, 203], ["27639.75", 239, 238], ["27012.54", 278, 276], ["26482.85", 310, 308], ["25919.32", 344, 343],
];
const resistances: [string, number, number][] = [
  ["28494.62", 189, 188], ["28287.80", 200, 199], ["27381.84", 255, 254], ["26723.24", 295, 294],
];

function ChartPane() {
  const rsiPath = rsi.map(([i, v]) => `${220 + i * 6.568},${260 + v / 3}`).join(" ");
  return (
    <svg viewBox="217 141 782 361" className="block w-full bg-white font-['DejaVu_Sans',Verdana,sans-serif] text-[8px]" role="img" aria-label="SENSEX price, volume and RSI chart">
      {/* axis backgrounds */}
      <rect x="951" y="141" width="47" height="361" fill="#f3f3f3" />
      <rect x="217" y="490" width="734" height="11" fill="#f5f5f5" />

      {/* grid */}
      <g stroke="#c4c4c4" strokeDasharray="2 1" shapeRendering="crispEdges">
        {priceTicks.map(([label, y]) => <path key={label} d={`M217 ${y + 0.5}H950`} />)}
        <path d="M217 379.5H950M217 403.5H950" />
        {months.map(([label, x]) => (
          <path key={label} d={`M${x + 0.5} 152V356M${x + 0.5} 367V428M${x + 0.5} 439V490`} />
        ))}
      </g>

      {/* pivot levels */}
      <g shapeRendering="crispEdges">
        <path d="M217 152.5H950" stroke="#9fd6fa" />
        {resistances.map(([label, y]) => <path key={label} d={`M217 ${y + 0.5}H950`} stroke="#9fd6fa" />)}
        {supports.map(([label, y]) => <path key={label} d={`M217 ${y + 0.5}H950`} stroke="#3a3aee" />)}
      </g>

      {/* candles */}
      <g shapeRendering="crispEdges">
        {candles.map((c, i) => {
          if (!c) return null;
          const [hi, top, bottom, lo, color] = c;
          const x = barX(i);
          const y = priceY(top);
          return (
            <g key={i}>
              <path d={`M${x + 0.5} ${priceY(hi)}V${priceY(lo)}`} stroke="#222" />
              {bottom - top < 5 ? (
                <path d={`M${x - 2} ${y + 0.5}h5`} stroke="#111" />
              ) : (
                <rect x={x - 1.5} y={y + 0.5} width="4" height={Math.max(1, priceY(bottom) - y - 1)} fill={color === "g" ? "#008000" : "#c80000"} stroke="#1a0a0a" />
              )}
            </g>
          );
        })}
      </g>

      {/* volume */}
      <g shapeRendering="crispEdges">
        {volumes.map(([v, color], i) => (
          <rect key={i} x={barX(i) - 2} y={428 - Math.round(v / 3)} width="4" height={Math.round(v / 3)} fill={color === "g" ? "#006400" : "#b22222"} />
        ))}
      </g>

      {/* rsi */}
      <path d="M217 452.5H950" stroke="#ff2020" />
      <path d="M217 464.5H950" stroke="#e02020" />
      <path d="M217 464.5H950" stroke="#8c6060" strokeDasharray="2 2" />
      <path d="M217 476H950" stroke="#ff8a8a" strokeWidth="2" />
      <polyline points={rsiPath} fill="none" stroke="#c77be0" strokeWidth="1" />
      <path d="M246.5 446v6M883.5 446v6" stroke="#f00" />
      <path d="M243.5 450h6l-3 4zM880.5 450h6l-3 4z" fill="#f00" />
      <path d="M568.5 480v5M581.5 475v5" stroke="#008000" strokeWidth="1.5" />
      <path d="M565.5 481h6l-3-4zM578.5 476h6l-3-4z" fill="#008000" />

      {/* pane borders and crosshair */}
      <path d="M217 356.5H998M217 428.5H998M217 490.5H950M217 501.5H998M950.5 141V502M998.5 141V502M217.5 490V502" stroke="#333" shapeRendering="crispEdges" fill="none" />
      <path d="M942.5 152V356M942.5 367V428M942.5 439V502" stroke="#111" shapeRendering="crispEdges" />

      {/* readouts */}
      <g className="text-[7px]">
        <g fill="#b03030">
          <text x="223" y="150">13-02-2017</text>
          <text x="271" y="150">O: 28450.93</text>
          <text x="414" y="150">C: 28351.62</text>
          <text x="464" y="150">Chg%: 0.06</text>
        </g>
        <text x="220" y="365" fill="#2c7a2c">VOLUME: 3817.07 (x100000)</text>
        <text x="220" y="437" fill="#c060d8">RSI(14):</text>
        <text x="256" y="437" fill="#c060d8">71.04</text>
      </g>
      <g className="text-[10px] italic">
        {supports.map(([label, , y]) => <text key={label} x="218" y={y} fill="#2424e0">{label}</text>)}
        {resistances.map(([label, , y]) => <text key={label} x="271" y={y} fill="#8fcdf5">{label}</text>)}
      </g>
      <g className="text-[9px] font-bold" fill="#c060d8">
        <text x="218" y="451">70.00</text>
        <text x="218" y="462">50.00</text>
        <text x="218" y="473">30.00</text>
      </g>

      {/* axis labels */}
      <g fill="#333">
        {priceTicks.map(([label, y]) => (
          <g key={label}>
            <path d={`M951 ${y + 0.5}h3M951 ${y + 8.5}h1M951 ${y + 15.5}h2M951 ${y + 23.5}h1`} stroke="#777" />
            <text x="955" y={y + 3}>{label}</text>
          </g>
        ))}
        <text x="955" y="382">4000</text>
        <text x="955" y="407">2000</text>
        <text x="955" y="467">50.00</text>
        <path d="M951 379.5h3M951 391.5h2M951 403.5h3M951 445.5h2M951 464.5h3M951 484.5h2" stroke="#777" />
        {months.map(([label, , x]) => <text key={label} x={x} y="498">{label}</text>)}
      </g>

      {/* value tags */}
      <rect x="950.5" y="197.5" width="48" height="10" fill="#b4ffb4" stroke="#222" />
      <text x="952" y="205" fill="#111">28351.62</text>
      <rect x="950.5" y="381.5" width="27" height="10" fill="#006400" stroke="#001800" />
      <text x="955" y="389" fill="#fff">3817</text>
      <rect x="950" y="412" width="29" height="10" fill="#ffff00" />
      <text x="951" y="420" fill="#222">x100K</text>
      <rect x="950.5" y="452.5" width="29" height="10" fill="#ba55d3" stroke="#5c2a69" />
      <text x="955" y="460" fill="#fff">71.04</text>
      <rect x="889.5" y="490.5" width="53" height="11" fill="#b4ffb4" stroke="#222" />
      <text x="891" y="498" fill="#111">13-02-2017</text>
    </svg>
  );
}

const marketItems = ["Stock", "NSE F&O", "Commodity", "Mutual Fund", "World Index"];

function MarketMenu() {
  return (
    <ul
      role="menu"
      className="absolute left-[90px] top-[34px] z-10 flex h-[113px] w-[110px] flex-col border border-[#9a9a9a] bg-[#fcfcfc] py-[2px] pl-[2px] pr-[6px] font-['Liberation_Sans',Arial,sans-serif] text-[9px] text-[#222] shadow-[2px_2px_2px_rgba(0,0,0,0.35)]"
    >
      {marketItems.map((item, i) => (
        <li key={item} className="flex flex-1">
          <button type="button" role="menuitem" className="flex w-full items-center text-left">
            <span className="flex h-full w-[18px] items-center justify-center bg-linear-to-r from-[#f6f5f2] to-[#d9d5cd]">
              {i === 0 && (
                <span className="flex h-4 w-4 items-center justify-center border border-[#4a5a8c] bg-[#b3bbd6]">
                  <svg viewBox="0 0 8 8" className="h-2 w-2"><path d="M1.5 4l2 2 3-4" stroke="#111" fill="none" strokeWidth="1.3" /></svg>
                </span>
              )}
            </span>
            <span className="ml-[7px] flex-1">{item}</span>
            <LensIcon dotted />
          </button>
        </li>
      ))}
    </ul>
  );
}

const alertTabs = [
  { name: "Alerts Criteria", width: "w-[74px]" },
  { name: "Price Alerts", width: "w-[66px]" },
  { name: "Scan Alerts", width: "w-[66px]" },
  { name: "Portfolio Alerts", width: "w-[78px]" },
  { name: "Order Management", width: "w-24" },
];

function ChartPanel() {
  return (
    <main className="relative min-w-0 flex-1 bg-[#f4f4f4]">
      <div className="flex h-[19px] items-center justify-between bg-[#a0a0a0] pl-[5px]">
        <PanelTitle>Charts</PanelTitle>
        <div className="flex items-center font-['Roboto',sans-serif] text-[9px] text-[#222]">
          <div className="relative flex h-[15px] w-[145px] items-center bg-[#bfccdb]">
            <select aria-label="Window layout" defaultValue="1Window" className="w-[108px] appearance-none bg-transparent pl-1 outline-none">
              <option>1Window</option>
            </select>
            <div className="pointer-events-none absolute left-[99px]"><BigCaret /></div>
            <button type="button" aria-label="Window colour" className="ml-2 flex items-center gap-[6px]">
              <span className="h-[11px] w-[11px] border border-[#6a5acd] bg-[#cdeeff]" />
              <BigCaret />
            </button>
          </div>
          <button type="button" aria-label="Full screen" className="ml-[2px]"><FullscreenIcon /></button>
          <button type="button" aria-label="Pop out" className="ml-2 mr-[5px]"><PopOutIcon /></button>
        </div>
      </div>
      <div className="flex h-4 items-center border-b border-r border-[#555] pl-[2px]">
        <input
          aria-label="Symbol"
          defaultValue="SENSEX"
          className="h-[10px] w-[30px] bg-[#3399ff] font-['Roboto',sans-serif] text-[8px] text-white outline-none"
        />
        <button type="button" aria-label="Symbol history" className="ml-10"><BigCaret /></button>
        <button type="button" aria-label="Search symbol" className="ml-2 bg-[#e4e4e4]"><LensIcon /></button>
        <span className="ml-[5px] font-['Liberation_Sans',Arial,sans-serif] text-[8px] text-[#111]">SENSEX</span>
      </div>
      <div className="flex h-4 items-center border-b border-r border-[#333] pl-1 font-['DejaVu_Sans',Verdana,sans-serif] text-[8px] text-[#222]">
        <div className="relative flex w-[74px] items-center">
          <select aria-label="Template" defaultValue="Vol-RSI" className="w-full appearance-none bg-transparent outline-none">
            <option>Vol-RSI</option>
          </select>
          <div className="pointer-events-none absolute right-0"><BigCaret /></div>
        </div>
        <div className="ml-[119px] flex gap-[3px]">
          <button type="button" aria-label="Zoom out"><ZoomIcon kind="out" /></button>
          <button type="button" aria-label="Zoom area"><ZoomIcon kind="area" /></button>
          <button type="button" aria-label="Reset zoom"><ZoomIcon kind="reset" /></button>
          <button type="button" aria-label="Chart settings"><NoteGearIcon /></button>
        </div>
      </div>
      <ChartPane />
      <div className="flex h-3 items-center bg-[#f0f0f0] px-1">
        <svg viewBox="0 0 5 7" className="h-[7px] w-[5px]"><path d="M4 1L1.5 3.5 4 6" stroke="#333" strokeWidth="1.3" fill="none" /></svg>
        <div className="ml-auto mr-[5px] h-[11px] w-[114px] bg-[#cdcdcd]" />
        <svg viewBox="0 0 5 7" className="h-[7px] w-[5px]"><path d="M1 1l2.5 2.5L1 6" stroke="#333" strokeWidth="1.3" fill="none" /></svg>
      </div>
      <div className="flex h-[17px] items-end bg-[#f7f7f7] pl-px font-['Liberation_Sans',Arial,sans-serif] text-[8px] text-[#777]">
        {alertTabs.map((tab) => (
          <button
            key={tab.name}
            type="button"
            className={clsx("flex h-[15px] items-center gap-1 whitespace-nowrap rounded-t-sm border border-b-0 border-[#b9b9b9] bg-[#f5f5f5] pl-[2px]", tab.width)}
          >
            <AlertTabIcon />
            {tab.name}
          </button>
        ))}
      </div>
      <MarketMenu />
    </main>
  );
}

function ToolRail() {
  return (
    <aside className="flex w-[25px] flex-shrink-0 flex-col items-center bg-[#f9f9f9] pr-px">
      <div className="mt-1 h-[5px] w-[18px] border-t-2 border-dotted border-[#c4c4c4]" />
      <button type="button" aria-label="Pointer" className="flex h-[15px] w-[23px] items-center justify-center border border-[#7ab8f5] bg-[#f3f8fe]">
        <Ico><path d="M4 1l5 5.5-2.3 0.3L8 10l-1.5 0.8L5.3 7.5 4 9z" fill="#e9e2c9" stroke="#777" strokeWidth="0.8" /></Ico>
      </button>
      <button type="button" aria-label="Vertical cursor" className="mt-[2px] flex h-4 w-[23px] items-center justify-center border border-[#7ab8f5] bg-[#f3f8fe]">
        <Ico><path d="M6 0v12" stroke={BLUE} strokeWidth="1.3" /></Ico>
      </button>
      <button type="button" aria-label="Crosshair" className="flex h-[19px] items-center">
        <Ico><path d="M6 1v10M1 6h10" stroke={BLUE} strokeWidth="1.4" /></Ico>
      </button>
      <div className="h-px w-5 bg-[#c8c8c8]" />
      <div className="mt-px flex h-[362px] flex-col">
        {railTools.map((tool) => (
          <button key={tool.label} type="button" aria-label={tool.label} className="flex flex-1 items-center">
            <Ico>{tool.art}</Ico>
          </button>
        ))}
      </div>
      <button type="button" aria-label="More tools" className="mb-1 mt-auto flex h-[9px] w-[13px] items-center self-end bg-[#dcdcdc] pl-1">
        <svg viewBox="0 0 7 6" className="h-[6px] w-[7px]"><path d="M0.5 0.5v5M2 0.5v5" stroke="#222" strokeWidth="0.8" /><path d="M3 0l3.5 3L3 6z" fill="#222" /></svg>
      </button>
    </aside>
  );
}

function StatusBar() {
  return (
    <footer className="flex h-[14px] items-center bg-[#f0f0f0] font-['Liberation_Sans',Arial,sans-serif] text-[8px] text-[#222]">
      <span className="flex-1 pl-[2px]">Done</span>
      <span className="w-[91px] whitespace-nowrap bg-[#d9d9d4] px-1 leading-3">NSE 5-Min Scans as of</span>
      <span className="ml-[2px] w-20 whitespace-nowrap bg-[#d9d9d4] px-[3px] leading-3">14/2/2017 11:36 AM</span>
      <div className="ml-[3px] flex h-3 w-[173px] items-center border-l border-[#cfcfcf] pl-[3px]">
        <button type="button" aria-label="Previous"><svg viewBox="0 0 5 8" className="h-2 w-[5px]"><path d="M5 0v8L0 4z" fill="#1583b8" /></svg></button>
        <span className="ml-1 text-[#bbb]">|</span>
        <span className="ml-1 flex-1 whitespace-nowrap">NSE Data as of : 14/2/2017 11:36 AM</span>
        <span className="mr-1 text-[#bbb]">|</span>
        <button type="button" aria-label="Next"><svg viewBox="0 0 5 8" className="h-2 w-[5px]"><path d="M0 0v8l5-4z" fill="#1583b8" /></svg></button>
      </div>
      <div className="ml-2 flex h-3 w-[15px] items-center justify-center">
        <span className="h-[10px] w-[10px] rounded-full bg-[#008000]" />
      </div>
      <div className="ml-px h-3 w-[29px] border-x border-[#d2d2d2]" />
      <div className="flex h-3 w-[22px] items-center justify-center border-r border-[#d2d2d2]">
        <Ico>
          <rect x="4.5" y="1" width="6.5" height="5.5" fill="#7fa9e8" stroke="#333a55" />
          <rect x="0.8" y="4.5" width="6" height="4.5" fill="#9dc0f0" stroke="#333a55" />
          <path d="M1.5 10.8h7l2-2.5" stroke="#555" fill="none" strokeWidth="1.3" />
        </Ico>
      </div>
      <div className="w-[75px]" />
    </footer>
  );
}

export default function App() {
  return (
    <div className="flex min-h-screen flex-col overflow-hidden bg-[#f4f4f4]">
      <TitleBar />
      <MenuBar />
      <Ticker />
      <FilterBar />
      <IconBar />
      <div className="flex flex-1 gap-[5px]">
        <LeftPanel />
        <div className="flex min-w-0 flex-1">
          <ChartPanel />
          <ToolRail />
        </div>
      </div>
      <StatusBar />
    </div>
  );
}
